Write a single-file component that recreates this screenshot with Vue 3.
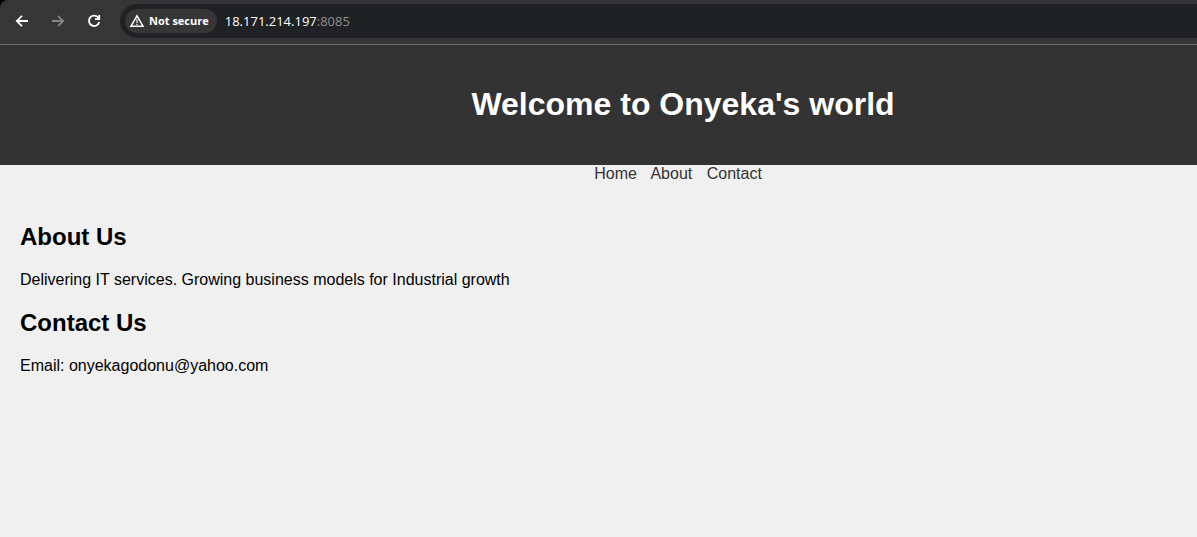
<script setup>
import { ref } from 'vue'

const host = ref('18.171.214.197')
const port = ref(':8085')
const links = [
  { label: 'Home', href: '#home' },
  { label: 'About', href: '#about' },
  { label: 'Contact', href: '#contact' },
]
</script>

<template>
  <div class="window">
    <div class="toolbar-frame">
      <div class="toolbar">
        <button class="tool" type="button" aria-label="Back">
          <svg viewBox="0 0 16 16" width="16" height="16"><path d="M14 8H3M8 2.8 2.8 8 8 13.2" /></svg>
        </button>
        <button class="tool" type="button" aria-label="Forward" disabled>
          <svg viewBox="0 0 16 16" width="16" height="16"><path d="M2 8h11M8 2.8 13.2 8 8 13.2" /></svg>
        </button>
        <button class="tool" type="button" aria-label="Reload">
          <svg viewBox="0 0 16 16" width="16" height="16"><path d="M12.4 4.8A5.2 5.2 0 1 0 13.2 9M13.2 2v4.2H9" /></svg>
        </button>
        <div class="address">
          <button class="security" type="button">
            <svg viewBox="0 0 16 16" width="16" height="16">
              <path d="M8 2.8 14 13.2H2Z" />
              <path class="mark" d="M8 6v4M8 10.8v1.4" />
            </svg>
            Not secure
          </button>
          <input v-model="host" class="host" type="text" aria-label="Address host" spellcheck="false" />
          <input v-model="port" class="port" type="text" aria-label="Address port" spellcheck="false" />
        </div>
      </div>
    </div>
    <div class="page">
      <header class="banner">
        <h1>Welcome to Onyeka's world</h1>
      </header>
      <nav class="menu">
        <template v-for="link in links" :key="link.label"><a :href="link.href">{{ link.label }}</a>{{ ' ' }}</template>
      </nav>
      <main class="content">
        <section id="about">
          <h2>About Us</h2>
          <p>Delivering IT services. Growing business models for Industrial growth</p>
        </section>
        <section id="contact">
          <h2>Contact Us</h2>
          <p>Email: onyekagodonu@yahoo.com</p>
        </section>
      </main>
    </div>
  </div>
</template>

<style>
body {
  margin: 0;
  background: #f0f0f0;
}
</style>

<style scoped>
.window {
  --overhang: 169px;
  overflow: hidden;
  font-family: "Liberation Sans", Arial, sans-serif;
}
.toolbar-frame {
  background: #000;
}
.toolbar {
  display: flex;
  align-items: center;
  height: 44px;
  box-sizing: border-box;
  padding: 0 0 2px 4px;
  background: #363636;
  border-top-left-radius: 8px;
}
button {
  display: flex;
  align-items: center;
  border: 0;
  color: #fff;
}
.tool {
  justify-content: center;
  width: 36px;
  height: 34px;
  padding: 0;
  background: none;
}
.tool:disabled {
  color: #858585;
}
svg {
  flex: none;
  fill: none;
  stroke: currentColor;
  stroke-width: 1.8;
}
.address {
  display: flex;
  flex: 1;
  align-items: center;
  height: 34px;
  margin-left: 8px;
  padding-left: 5px;
  background: #202124;
  border-radius: 17px 0 0 17px;
  font: 13px/18px "Open Sans", "Noto Sans", sans-serif;
}
.security {
  gap: 4px;
  height: 24px;
  margin-right: 8px;
  padding: 0 8px 0 4px;
  background: #363636;
  border-radius: 12px;
  font: 700 11px/16px "Open Sans", "Noto Sans", sans-serif;
  white-space: nowrap;
}
.security svg {
  stroke-width: 1.5;
}
.security .mark {
  stroke: #a8a8a8;
  stroke-width: 2;
}
input {
  height: 24px;
  padding: 0;
  border: 0;
  outline: 0;
  background: none;
  color: #fff;
  font: inherit;
}
.host {
  width: 92px;
  field-sizing: content;
}
.port {
  flex: 1;
  min-width: 0;
  color: #8c8d8f;
}
.page {
  width: calc(100% + var(--overhang));
  border-top: 1px solid #6a6a6a;
  font-size: 16px;
  line-height: 18px;
}
.banner {
  padding: 41px 20px 42px;
  background: #333;
  color: #fff;
  text-align: center;
}
h1 {
  margin: 0;
  font-size: 32px;
  line-height: 37px;
}
.menu {
  text-align: center;
}
.menu a {
  margin-right: 10px;
  color: #333;
  text-decoration: none;
}
.content {
  padding: 20px;
}
h2 {
  margin: 20px 0;
  font-size: 24px;
  line-height: 28px;
  color: #000;
}
p {
  margin: 0;
  color: #000;
}
</style>
